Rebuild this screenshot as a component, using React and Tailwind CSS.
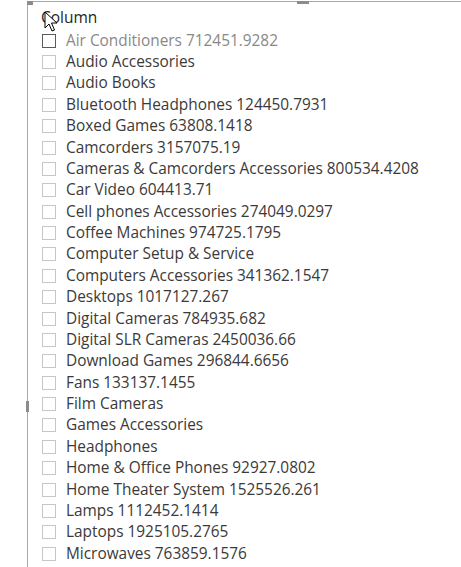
import React from "react";

const items = [
  "Air Conditioners 712451.9282",
  "Audio Accessories",
  "Audio Books",
  "Bluetooth Headphones 124450.7931",
  "Boxed Games 63808.1418",
  "Camcorders 3157075.19",
  "Cameras & Camcorders Accessories 800534.4208",
  "Car Video 604413.71",
  "Cell phones Accessories 274049.0297",
  "Coffee Machines 974725.1795",
  "Computer Setup & Service",
  "Computers Accessories 341362.1547",
  "Desktops 1017127.267",
  "Digital Cameras 784935.682",
  "Digital SLR Cameras 2450036.66",
  "Download Games 296844.6656",
  "Fans 133137.1455",
  "Film Cameras",
  "Games Accessories",
  "Headphones",
  "Home & Office Phones 92927.0802",
  "Home Theater System 1525526.261",
  "Lamps 1112452.1414",
  "Laptops 1925105.2765",
  "Microwaves 763859.1576",
];

export default function App() {
  return (
    <div
      className="w-[461px] h-[567px] overflow-hidden bg-white pl-[27px] pt-[1px]"
      style={{ fontFamily: '"Open Sans", "Noto Sans", sans-serif' }}
    >
      <div className="relative h-full border-l border-t border-[#a8a8a8]">
        {/* resize handles */}
        <div className="absolute -left-px -top-px w-[6px] h-[4px] bg-[#8c8c8c]" />
        <div className="absolute left-[269px] -top-px w-[12px] h-[3px] bg-[#8c8c8c]" />
        <div className="absolute -left-[2px] top-[399px] w-[3px] h-[11px] bg-[#8c8c8c]" />

        <div className="pl-[13px] pt-[4px] h-[28px] text-[15.5px] leading-[22px] text-[#252423]">
          Column
        </div>
        <div className="flex flex-col">
          {items.map((t, i) => (
            <div key={i} className="flex items-center gap-[10px] h-[21.375px] pl-[14px]">
              <div
                className={
                  "w-[14px] h-[14px] border bg-white shrink-0 " +
                  (i === 0 ? "border-[#5a5a5a]" : "border-[#c6c6c6]")
                }
              />
              <span
                className={
                  "whitespace-nowrap text-[15.4px] leading-[20px] " +
                  (i === 0 ? "text-[#8a8886]" : "text-[#3b3a39]")
                }
              >
                {t}
              </span>
            </div>
          ))}
          <div className="flex items-center h-[21.375px] pl-[14px]">
            <div className="w-[14px] h-[14px] border border-[#c6c6c6] bg-white shrink-0" />
          </div>
        </div>

        {/* mouse cursor */}
        <svg
          className="absolute left-[16px] top-[9px]"
          width="14"
          height="22"
          viewBox="0 0 14 22"
        >
          <path
            d="M1 1 L1 17 L5 13 L8 20 L10.5 19 L7.5 12 L13 12 Z"
            fill="white"
            stroke="black"
            strokeWidth="1"
            strokeLinejoin="miter"
          />
        </svg>
      </div>
    </div>
  );
}
